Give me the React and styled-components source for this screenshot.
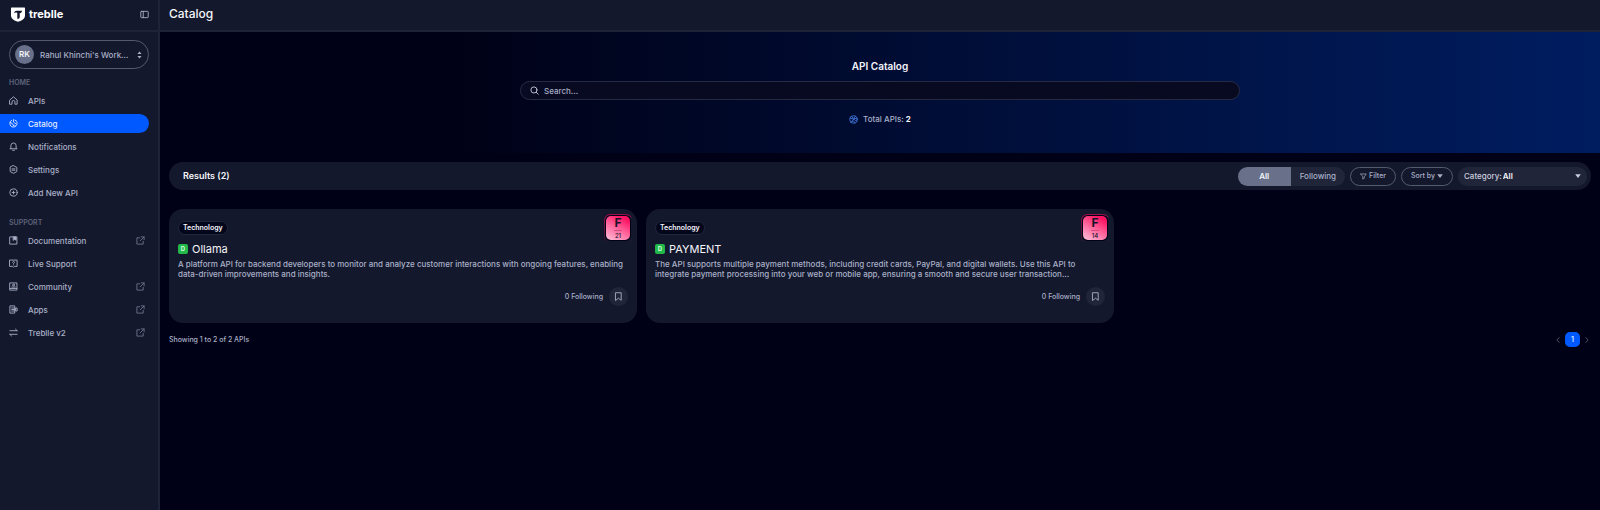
import React from "react";
import styled, { createGlobalStyle } from "styled-components";

const c = {
  page: "#000116",
  panel: "#14182c",
  line: "#1d2338",
  raised: "#20253a",
  outline: "#545a70",
  muted: "#5d637b",
  text: "#a9b0c8",
  soft: "#c9cddd",
  white: "#f4f5fa",
  blue: "#0058ff",
};

const GlobalStyle = createGlobalStyle`
  * { box-sizing: border-box; }
  body {
    margin: 0;
    background: ${c.page};
    color: ${c.text};
    font: 500 8px/10px Inter, "Liberation Sans", sans-serif;
  }
  button, input, select { font: inherit; color: inherit; margin: 0; }
  button { cursor: pointer; }
  h1, h2, h3, p, ul { margin: 0; padding: 0; }
`;

const Shell = styled.div`
  display: flex;
  min-height: 100vh;
`;

const Sidebar = styled.aside`
  flex: none;
  width: 160px;
  background: ${c.panel};
  border-right: 2px solid ${c.line};
`;

const SidebarTop = styled.div`
  display: flex;
  align-items: center;
  justify-content: space-between;
  height: 32px;
  padding: 0 9px 2px 11px;
  border-bottom: 2px solid ${c.line};
`;

const Brand = styled.a`
  display: flex;
  align-items: center;
  gap: 4px;
  color: #fff;
  font-size: 11px;
  font-weight: 700;
  line-height: 14px;
  text-decoration: none;
`;

const IconButton = styled.button`
  display: flex;
  padding: 0;
  border: 0;
  background: none;
  color: ${(p) => (p.$dim ? c.muted : c.text)};
`;

const Workspace = styled.button`
  display: flex;
  align-items: center;
  gap: 6px;
  width: 140px;
  height: 29px;
  margin: 8px 9px 0;
  padding: 0 6px 0 5px;
  border: 1px solid ${c.outline};
  border-radius: 15px;
  background: none;
  text-align: left;
`;

const Avatar = styled.span`
  flex: none;
  width: 19px;
  height: 19px;
  border-radius: 50%;
  background: #68708a;
  color: ${c.white};
  font-weight: 600;
  line-height: 19px;
  text-align: center;
`;

const WorkspaceName = styled.span`
  flex: 1;
  white-space: nowrap;
`;

const NavLabel = styled.h2`
  padding: 9px 9px 4px;
  color: ${c.muted};
  font-size: 7px;
  font-weight: 600;
  line-height: 9px;
`;

const NavList = styled.ul`
  display: flex;
  flex-direction: column;
  gap: 4px;
  padding-bottom: 7px;
  list-style: none;
`;

const NavLink = styled.a`
  display: flex;
  align-items: center;
  gap: 10px;
  height: 19px;
  margin-right: 9px;
  padding: 0 4px 0 9px;
  border-radius: 0 10px 10px 0;
  background: ${(p) => (p.$active ? c.blue : "transparent")};
  color: ${(p) => (p.$active ? "#e4ecff" : c.text)};
  text-decoration: none;
`;

const NavText = styled.span`
  flex: 1;
`;

const Main = styled.main`
  flex: 1;
  min-width: 0;
`;

const TopBar = styled.header`
  display: flex;
  align-items: center;
  height: 32px;
  padding: 0 9px 2px;
  background: ${c.panel};
  border-bottom: 2px solid ${c.line};
`;

const PageTitle = styled.h1`
  color: ${c.white};
  font-size: 12px;
  font-weight: 500;
  line-height: 16px;
`;

const Hero = styled.section`
  display: flex;
  flex-direction: column;
  align-items: center;
  padding: 27px 0 29px;
  background: linear-gradient(90deg, #000116 20%, #001d60 100%);
`;

const HeroTitle = styled.h2`
  color: ${c.white};
  font-size: 10px;
  font-weight: 600;
  line-height: 14px;
`;

const SearchBox = styled.label`
  display: flex;
  align-items: center;
  gap: 5px;
  width: 50%;
  height: 19px;
  margin: 8px 0 14px;
  padding: 0 9px;
  border: 1px solid #262b43;
  border-radius: 10px;
  background: #080a22;
  color: ${c.soft};
`;

const SearchInput = styled.input`
  flex: 1;
  padding: 0;
  border: 0;
  outline: 0;
  background: none;
  &::placeholder { color: ${c.text}; opacity: 1; }
`;

const Total = styled.p`
  display: flex;
  align-items: center;
  gap: 5px;
  b { color: ${c.white}; font-weight: 700; }
`;

const Content = styled.div`
  padding: 9px;
`;

const ResultsBar = styled.section`
  display: flex;
  align-items: center;
  gap: 5px;
  height: 28px;
  padding: 0 4px 0 14px;
  border-radius: 14px;
  background: ${c.panel};
`;

const ResultsTitle = styled.h2`
  flex: 1;
  color: ${c.white};
  font-size: 9px;
  font-weight: 600;
  line-height: 14px;
`;

const Segmented = styled.div`
  display: flex;
  height: 19px;
  border-radius: 10px;
  overflow: hidden;
  background: ${c.raised};
`;

const Segment = styled.button`
  min-width: 53px;
  padding: 0 9px;
  border: 0;
  background: ${(p) => (p.$active ? "#68708a" : "transparent")};
  color: ${(p) => (p.$active ? c.white : c.text)};
  font-weight: ${(p) => (p.$active ? 600 : 500)};
`;

const PillButton = styled.button`
  display: flex;
  align-items: center;
  justify-content: center;
  gap: 2px;
  height: 19px;
  padding: 0 9px;
  border: 1px solid ${c.outline};
  border-radius: 10px;
  background: none;
  font-size: 7px;
`;

const SelectPill = styled.label`
  display: flex;
  align-items: center;
  width: 129px;
  height: 19px;
  padding: 0 6px;
  border-radius: 10px;
  background: ${c.raised};
  color: ${c.soft};
`;

const Select = styled.select`
  flex: 1;
  min-width: 0;
  padding: 0 0 0 1px;
  border: 0;
  outline: 0;
  appearance: none;
  background: none;
  color: ${c.white};
  font-weight: 600;
`;

const CardGrid = styled.section`
  display: grid;
  grid-template-columns: repeat(3, 1fr);
  gap: 9px;
  margin-top: 19px;
`;

const Card = styled.article`
  position: relative;
  display: flex;
  flex-direction: column;
  align-items: flex-start;
  min-height: 114px;
  padding: 12px 9px 17px;
  border-radius: 14px;
  background: ${c.panel};
`;

const Tag = styled.span`
  height: 14px;
  padding: 0 4px;
  border: 1px solid #20263d;
  border-radius: 7px;
  background: #04061c;
  color: ${c.white};
  font-size: 7px;
  font-weight: 600;
  line-height: 12px;
`;

const Grade = styled.div`
  position: absolute;
  top: 5px;
  right: 5px;
  display: grid;
  place-items: center;
  width: 28px;
  height: 28px;
`;

const GradeFrame = styled.svg`
  grid-area: 1 / 1;
`;

const GradeTile = styled.div`
  grid-area: 1 / 1;
  display: flex;
  flex-direction: column;
  align-items: center;
  width: 24px;
  height: 24px;
  border-radius: 5px;
  background: linear-gradient(30deg, #ffb8d4 5%, #ff6a9f 45%, #ff1464 85%);
  color: #14142a;
  font-size: 6px;
  line-height: 9px;
`;

const GradeLetter = styled.span`
  border-bottom: 1px solid #d84a80;
  font-size: 12px;
  font-weight: 700;
  line-height: 14px;
`;

const CardTitle = styled.h3`
  display: flex;
  align-items: center;
  gap: 4px;
  margin-top: 7px;
  color: ${c.white};
  font-size: 11px;
  font-weight: 400;
  line-height: 14px;
`;

const Env = styled.span`
  width: 10px;
  height: 10px;
  border-radius: 2px;
  background: #22b84a;
  color: #d5ffe0;
  font-size: 6px;
  font-weight: 700;
  line-height: 10px;
  text-align: center;
`;

const Description = styled.p`
  display: -webkit-box;
  margin-top: 3px;
  overflow: hidden;
  -webkit-box-orient: vertical;
  -webkit-line-clamp: 2;
`;

const CardFoot = styled.div`
  display: flex;
  align-items: center;
  gap: 6px;
  margin-top: auto;
  margin-left: auto;
  font-size: 7px;
`;

const RoundButton = styled.button`
  display: grid;
  place-items: center;
  width: 19px;
  height: 19px;
  padding: 0;
  border: 0;
  border-radius: 50%;
  background: ${c.raised};
`;

const Footer = styled.footer`
  display: flex;
  align-items: center;
  justify-content: space-between;
  margin-top: 9px;
  font-size: 7px;
`;

const Pager = styled.nav`
  display: flex;
  align-items: center;
  gap: 3px;
`;

const PageButton = styled.button`
  width: 15px;
  height: 15px;
  padding: 0;
  border: 0;
  border-radius: 5px;
  background: ${c.blue};
  color: #dce8ff;
  font-weight: 600;
`;

const Svg = ({ size = 9, stroke = 1, children }) => (
  <svg
    width={size}
    height={size}
    viewBox="0 0 10 10"
    fill="none"
    stroke="currentColor"
    strokeWidth={stroke}
    strokeLinecap="round"
    strokeLinejoin="round"
    aria-hidden="true"
  >
    {children}
  </svg>
);

const icons = {
  home: <path d="M1 4.4 5 .9l4 3.5v4.7H6.6V6.6a1.6 1.6 0 0 0-3.2 0v2.5H1z" />,
  catalog: (
    <>
      <path d="M3 1.300A4.100 4.100 0 1 0 9 5.600" />
      <path d="M1.200 3.800 3.600 5 5.200 7.600M5 .8v2.400L6.800 5 9.200 4.200M6.600 1.200 8.600 2.600M6.400 6.800 7 7.600" />
    </>
  ),
  bell: <path d="M1.2 7.5h7.6M2.1 7.5V4a2.9 2.9 0 0 1 5.8 0v3.5M4 9.2h2" />,
  settings: (
    <>
      <path d="M5 .7 8.700 2.700v4.600L5 9.300 1.300 7.300V2.700z" />
      <path d="M3.400 4.300h3.200M3.400 5.800h3.200" />
    </>
  ),
  add: (
    <>
      <circle cx="5" cy="5" r="4.100" />
      <path d="M5 3.500v3M3.500 5h3" />
    </>
  ),
  docs: (
    <>
      <path d="M1.200 1h7.600v8H1.200z" />
      <path d="M5 1h2.800v3.600L6.400 3.600 5 4.600z" fill="currentColor" />
    </>
  ),
  support: (
    <>
      <path d="M1 1.200h8v7H6L5 9.200 4 8.200H1z" />
      <path d="M4 3.500c.2-1 2-1 2 .1C6 4.400 5 4.400 5 5.200M5 6.500v.1" />
    </>
  ),
  community: (
    <>
      <path d="M1.200 1h7.600v8H1.200zM1.200 7.200h7.600M3 5.600h4" />
      <circle cx="5" cy="3.300" r="1" />
    </>
  ),
  apps: <path d="M6.400 2V1H1v8h5.400V8M3 3.300h3.400M3 5h3.400M3 6.700h3.400M6.400 3v4M7.800 3.300h1.200v3.400H7.800z" />,
  swap: <path d="M1 3h8M7.200 1.200 9 3M9 7H1M2.800 8.800 1 7" />,
  external: <path d="M4 2H1v7h7V6M5.800 1H9v3.200M9 1 4.600 5.400" />,
  panel: <path d="M1.500 1.500h7a.6.6 0 0 1 .6.6v5.800a.6.6 0 0 1-.6.6h-7a.6.6 0 0 1-.6-.6V2.100a.6.6 0 0 1 .6-.6zM3.600 1.500v7" />,
  search: (
    <>
      <circle cx="4.400" cy="4.400" r="3.400" />
      <path d="m7 7 2.200 2.200" />
    </>
  ),
  total: (
    <>
      <circle cx="5" cy="5" r="4.200" />
      <path d="M1.200 3.600 5 4.400l3.800-.8M5 4.400 3.800 6.800 2 8M3.800 6.800l3 1.600M5 4.400 7 6l1.600.8M3 1.400 5 4.400 7 1.400" />
    </>
  ),
  filter: <path d="M1 1.400h8L6.200 5.200v2.200L4 8.800V5.200z" />,
  bookmark: <path d="M2 .8h6v8.400L5 6.900 2 9.200z" />,
  left: <path d="M6.500 2 3.500 5l3 3" />,
  right: <path d="m3.500 2 3 3-3 3" />,
};

const Caret = ({ size = 6 }) => (
  <svg width={size} height={size} viewBox="0 0 6 6" fill="currentColor" aria-hidden="true">
    <path d="M.2 1.200h5.600L3 5z" />
  </svg>
);

const UpDown = () => (
  <svg width="5" height="8" viewBox="0 0 5 8" fill="currentColor" aria-hidden="true">
    <path d="M.4 3 2.500.6 4.600 3zM.4 5h4.200L2.500 7.400z" />
  </svg>
);

const Shield = () => (
  <svg width="14" height="15" viewBox="0 0 14 15" aria-hidden="true">
    <path d="M.6.500h12.800q.6 0 .6.600V8.500c0 3-2.600 5.200-7 6.200C2.600 13.700 0 11.500 0 8.500V1.100q0-.6.600-.6z" fill="#fff" />
    <path d="M3.200 6.200C3.300 4.500 4.200 3.700 5.800 3.700H11c-.1 1.600-.8 2.400-2.300 2.500v3.700c0 1.200-.8 1.900-2.400 1.900V5.900C5.200 5.200 4 5.300 3.200 6.200z" fill={c.panel} />
  </svg>
);

const home = [
  ["APIs", "home"],
  ["Catalog", "catalog"],
  ["Notifications", "bell"],
  ["Settings", "settings"],
  ["Add New API", "add"],
];

const support = [
  ["Documentation", "docs", true],
  ["Live Support", "support", false],
  ["Community", "community", true],
  ["Apps", "apps", true],
  ["Treblle v2", "swap", true],
];

const apis = [
  {
    name: "Ollama",
    score: 21,
    text: "A platform API for backend developers to monitor and analyze customer interactions with ongoing features, enabling data-driven improvements and insights.",
  },
  {
    name: "PAYMENT",
    score: 14,
    text: "The API supports multiple payment methods, including credit cards, PayPal, and digital wallets. Use this API to integrate payment processing into your web or mobile app, ensuring a smooth and secure user transaction...",
  },
];

const Dim = styled.span`
  display: flex;
  color: #6d738b;
`;

const TotalIcon = styled.span`
  display: flex;
  color: #3d73d6;
`;

const Nav = ({ label, items }) => (
  <nav aria-label={label}>
    <NavLabel>{label}</NavLabel>
    <NavList>
      {items.map(([name, icon, external]) => (
        <li key={name}>
          <NavLink href="#" $active={name === "Catalog"}>
            <Svg>{icons[icon]}</Svg>
            <NavText>{name}</NavText>
            {external && (
              <Dim>
                <Svg>{icons.external}</Svg>
              </Dim>
            )}
          </NavLink>
        </li>
      ))}
    </NavList>
  </nav>
);

const ApiCard = ({ name, score, text }) => (
  <Card>
    <Tag>Technology</Tag>
    <Grade>
      <GradeFrame width="28" height="28" viewBox="0 0 28 28" fill="none" aria-hidden="true">
        <defs>
          <linearGradient id={`edge-${score}`} x1="0" y1="0" x2="0" y2="1">
            <stop offset="0" stopColor="#a0104a" />
            <stop offset="1" stopColor="#5a1038" stopOpacity="0.5" />
          </linearGradient>
        </defs>
        <rect x="1" y="1" width="26" height="26" rx="6" fill={c.page} />
        <path
          d="M2 27.500Q.5 26 .5 24V7Q.5.5 7 .5h14.500q4.500 0 6 3M26.500 27.500l1-1"
          stroke={`url(#edge-${score})`}
        />
      </GradeFrame>
      <GradeTile>
        <GradeLetter>F</GradeLetter>
        {score}
      </GradeTile>
    </Grade>
    <CardTitle>
      <Env>D</Env>
      {name}
    </CardTitle>
    <Description>{text}</Description>
    <CardFoot>
      0 Following
      <RoundButton aria-label={`Follow ${name}`}>
        <Svg>{icons.bookmark}</Svg>
      </RoundButton>
    </CardFoot>
  </Card>
);

export default function App() {
  return (
    <>
      <GlobalStyle />
      <Shell>
        <Sidebar>
          <SidebarTop>
            <Brand href="#">
              <Shield />
              treblle
            </Brand>
            <IconButton aria-label="Collapse sidebar">
              <Svg>{icons.panel}</Svg>
            </IconButton>
          </SidebarTop>
          <Workspace>
            <Avatar>RK</Avatar>
            <WorkspaceName>Rahul Khinchi's Work...</WorkspaceName>
            <UpDown />
          </Workspace>
          <Nav label="HOME" items={home} />
          <Nav label="SUPPORT" items={support} />
        </Sidebar>
        <Main>
          <TopBar>
            <PageTitle>Catalog</PageTitle>
          </TopBar>
          <Hero>
            <HeroTitle>API Catalog</HeroTitle>
            <SearchBox>
              <Svg>{icons.search}</Svg>
              <SearchInput type="search" aria-label="Search" placeholder="Search..." />
            </SearchBox>
            <Total>
              <TotalIcon>
                <Svg>{icons.total}</Svg>
              </TotalIcon>
              <span>
                Total APIs: <b>2</b>
              </span>
            </Total>
          </Hero>
          <Content>
            <ResultsBar>
              <ResultsTitle>Results (2)</ResultsTitle>
              <Segmented>
                <Segment $active>All</Segment>
                <Segment>Following</Segment>
              </Segmented>
              <PillButton>
                <Svg size={7}>{icons.filter}</Svg>
                Filter
              </PillButton>
              <PillButton>
                Sort by
                <Caret />
              </PillButton>
              <SelectPill>
                Category:
                <Select defaultValue="All">
                  <option>All</option>
                  <option>Technology</option>
                </Select>
                <Caret />
              </SelectPill>
            </ResultsBar>
            <CardGrid>
              {apis.map((api) => (
                <ApiCard key={api.name} {...api} />
              ))}
            </CardGrid>
            <Footer>
              Showing 1 to 2 of 2 APIs
              <Pager aria-label="Pages">
                <IconButton $dim aria-label="Previous page">
                  <Svg size={8}>{icons.left}</Svg>
                </IconButton>
                <PageButton>1</PageButton>
                <IconButton $dim aria-label="Next page">
                  <Svg size={8}>{icons.right}</Svg>
                </IconButton>
              </Pager>
            </Footer>
          </Content>
        </Main>
      </Shell>
    </>
  );
}
